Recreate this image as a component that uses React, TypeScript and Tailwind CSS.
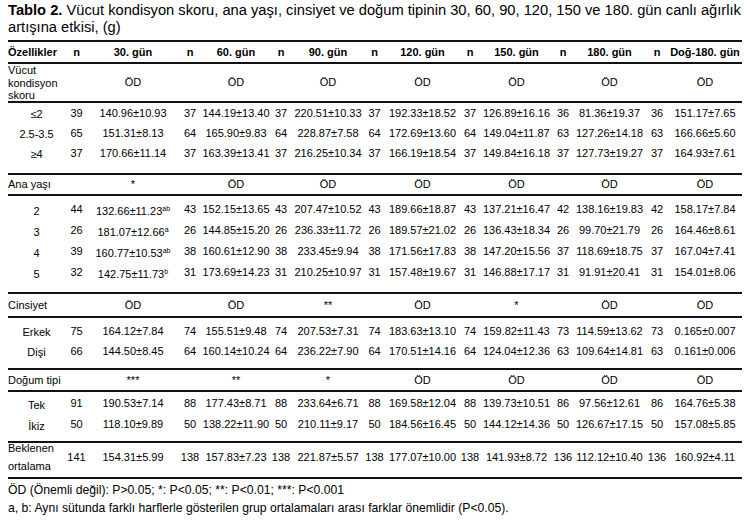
import React from "react";

const GRID =
  "grid grid-cols-[57px_23px_90px_24px_68px_22px_72px_21px_75px_20px_73px_20px_73px_22px_74px]";

type Val = string | { v: string; s: string };

function Cell({ val }: { val: Val }) {
  if (typeof val === "string") return <span>{val}</span>;
  return (
    <span>
      {val.v}
      <span className="text-[7px] align-[4px]">{val.s}</span>
    </span>
  );
}

function DataRow({ label, vals, h }: { label: string; vals: Val[]; h: string }) {
  return (
    <div className={`${GRID} ${h} items-center`}>
      <div className="text-center pt-[3px]">{label}</div>
      {vals.map((v, i) => (
        <div key={i} className="text-center whitespace-nowrap">
          <Cell val={v} />
        </div>
      ))}
    </div>
  );
}

function SigRow({ label, marks, h }: { label: string; marks: string[]; h: string }) {
  return (
    <div className={`${GRID} ${h} items-center`}>
      <div className="whitespace-nowrap">{label}</div>
      {marks.map((m, i) => (
        <React.Fragment key={i}>
          <div />
          <div className="text-center">{m}</div>
        </React.Fragment>
      ))}
    </div>
  );
}

const line = "h-[2px] bg-[#111]";

export default function App() {
  const od7 = ["ÖD", "ÖD", "ÖD", "ÖD", "ÖD", "ÖD", "ÖD"];
  return (
    <div className="bg-white w-[747px] h-[522px] pl-[8px] text-black font-['Liberation_Sans',Arial,sans-serif]">
      <div className="pt-[2px] text-[14.7px] leading-[17px] whitespace-nowrap">
        <b>Tablo 2.</b> Vücut kondisyon skoru, ana yaşı, cinsiyet ve doğum tipinin 30, 60, 90, 120, 150 ve 180. gün canlı ağırlık
        <br />
        artışına etkisi, (g)
      </div>
      <div className="mt-[4px] w-[734px] text-[11px] leading-[13px]">
        <div className={line} />
        <div className={`${GRID} h-[20px] items-center font-bold`}>
          <div>Özellikler</div>
          <div className="text-center">n</div>
          <div className="text-center">30. gün</div>
          <div className="text-center">n</div>
          <div className="text-center">60. gün</div>
          <div className="text-center">n</div>
          <div className="text-center">90. gün</div>
          <div className="text-center">n</div>
          <div className="text-center">120. gün</div>
          <div className="text-center">n</div>
          <div className="text-center">150. gün</div>
          <div className="text-center">n</div>
          <div className="text-center">180. gün</div>
          <div className="text-center">n</div>
          <div className="text-center whitespace-nowrap">Doğ-180. gün</div>
        </div>
        <div className={line} />
        <div className={`${GRID} h-[37px] items-center`}>
          <div className="leading-[12.5px]">
            Vücut
            <br />
            kondisyon
            <br />
            skoru
          </div>
          {od7.map((m, i) => (
            <React.Fragment key={i}>
              <div />
              <div className="text-center">{m}</div>
            </React.Fragment>
          ))}
        </div>
        <div className={line} />
        <div className="pt-[0px] pb-[10px]">
          <DataRow h="h-[20px]" label="≤2" vals={["39", "140.96±10.93", "37", "144.19±13.40", "37", "220.51±10.33", "37", "192.33±18.52", "37", "126.89±16.16", "36", "81.36±19.37", "36", "151.17±7.65"]} />
          <DataRow h="h-[20px]" label="2.5-3.5" vals={["65", "151.31±8.13", "64", "165.90±9.83", "64", "228.87±7.58", "64", "172.69±13.60", "64", "149.04±11.87", "63", "127.26±14.18", "63", "166.66±5.60"]} />
          <DataRow h="h-[20px]" label="≥4" vals={["37", "170.66±11.14", "37", "163.39±13.41", "37", "216.25±10.34", "37", "166.19±18.54", "37", "149.84±16.18", "37", "127.73±19.27", "37", "164.93±7.61"]} />
        </div>
        <div className={line} />
        <SigRow h="h-[19px]" label="Ana yaşı" marks={["*", "ÖD", "ÖD", "ÖD", "ÖD", "ÖD", "ÖD"]} />
        <div className={line} />
        <div className="pt-[3px] pb-[9px]">
          <DataRow h="h-[21px]" label="2" vals={["44", { v: "132.66±11.23", s: "ab" }, "43", "152.15±13.65", "43", "207.47±10.52", "43", "189.66±18.87", "43", "137.21±16.47", "42", "138.16±19.83", "42", "158.17±7.84"]} />
          <DataRow h="h-[21px]" label="3" vals={["26", { v: "181.07±12.66", s: "a" }, "26", "144.85±15.20", "26", "236.33±11.72", "26", "189.57±21.02", "26", "136.43±18.34", "26", "99.70±21.79", "26", "164.46±8.61"]} />
          <DataRow h="h-[21px]" label="4" vals={["39", { v: "160.77±10.53", s: "ab" }, "38", "160.61±12.90", "38", "233.45±9.94", "38", "171.56±17.83", "38", "147.20±15.56", "37", "118.69±18.75", "37", "167.04±7.41"]} />
          <DataRow h="h-[21px]" label="5" vals={["32", { v: "142.75±11.73", s: "b" }, "31", "173.69±14.23", "31", "210.25±10.97", "31", "157.48±19.67", "31", "146.88±17.17", "31", "91.91±20.41", "31", "154.01±8.06"]} />
        </div>
        <div className={line} />
        <SigRow h="h-[22px]" label="Cinsiyet" marks={["ÖD", "ÖD", "**", "ÖD", "*", "ÖD", "ÖD"]} />
        <div className={line} />
        <div className="pt-[3px] pb-[7px]">
          <DataRow h="h-[20px]" label="Erkek" vals={["75", "164.12±7.84", "74", "155.51±9.48", "74", "207.53±7.31", "74", "183.63±13.10", "74", "159.82±11.43", "73", "114.59±13.62", "73", "0.165±0.007"]} />
          <DataRow h="h-[20px]" label="Dişi" vals={["66", "144.50±8.45", "64", "160.14±10.24", "64", "236.22±7.90", "64", "170.51±14.16", "64", "124.04±12.36", "63", "109.64±14.81", "63", "0.161±0.006"]} />
        </div>
        <div className={line} />
        <SigRow h="h-[20px]" label="Doğum tipi" marks={["***", "**", "*", "ÖD", "ÖD", "ÖD", "ÖD"]} />
        <div className={line} />
        <div className="pt-[1px] pb-[6px]">
          <DataRow h="h-[21px]" label="Tek" vals={["91", "190.53±7.14", "88", "177.43±8.71", "88", "233.64±6.71", "88", "169.58±12.04", "88", "139.73±10.51", "86", "97.56±12.61", "86", "164.76±5.38"]} />
          <DataRow h="h-[21px]" label="İkiz" vals={["50", "118.10±9.89", "50", "138.22±11.90", "50", "210.11±9.17", "50", "184.56±16.45", "50", "144.12±14.36", "50", "126.67±17.15", "50", "157.08±5.85"]} />
        </div>
        <div className={line} />
        <div className={`${GRID} grid-rows-[28px] h-[34px] items-center pb-[6px]`}>
          <div className="leading-[18px]">
            Beklenen
            <br />
            ortalama
          </div>
          {["141", "154.31±5.99", "138", "157.83±7.23", "138", "221.87±5.57", "138", "177.07±10.00", "138", "141.93±8.72", "136", "112.12±10.40", "136", "160.92±4.11"].map((v, i) => (
            <div key={i} className="text-center whitespace-nowrap">
              {v}
            </div>
          ))}
        </div>
        <div className={line} />
      </div>
      <div className="pt-[2px] text-[12.2px] leading-[18px] whitespace-nowrap">
        <div>ÖD (Önemli değil): P&gt;0.05; *: P&lt;0.05; **: P&lt;0.01; ***: P&lt;0.001</div>
        <div>a, b: Aynı sütunda farklı harflerle gösterilen grup ortalamaları arası farklar önemlidir (P&lt;0.05).</div>
      </div>
    </div>
  );
}
